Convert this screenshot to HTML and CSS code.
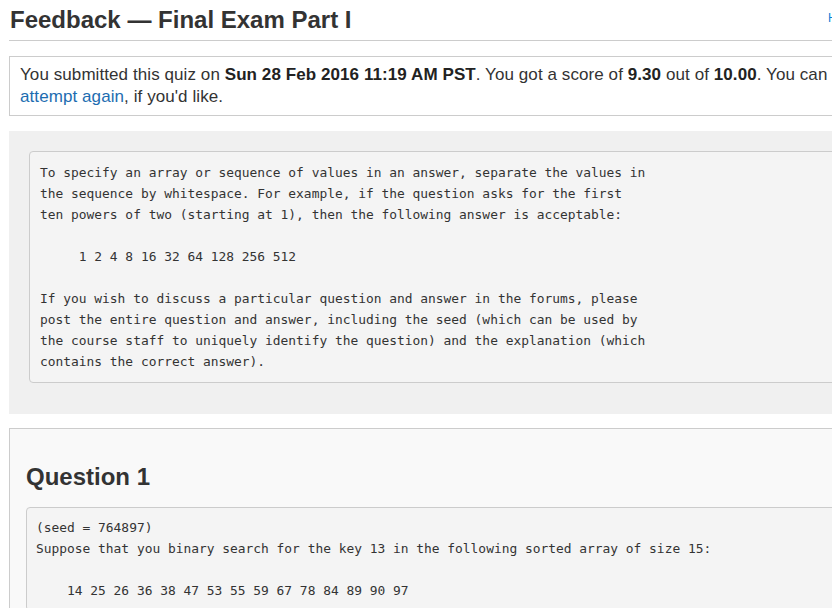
FILE: index.html
```html
<!DOCTYPE html>
<html>
<head>
<meta charset="utf-8">
<link rel="stylesheet" href="styles.css">
</head>
<body>
<div class="page">
  <header class="header">
    <h1 class="title">Feedback — Final Exam Part I</h1>
    <a class="help" href="#">Help Center</a>
  </header>
  <div class="submission">
    You submitted this quiz on <b>Sun 28 Feb 2016 11:19 AM PST</b>. You got a score of <b>9.30</b> out of <b>10.00</b>. You can <a href="#">attempt again</a>, if you'd like.
  </div>
  <section class="intro">
<pre class="code">To specify an array or sequence of values in an answer, separate the values in
the sequence by whitespace. For example, if the question asks for the first
ten powers of two (starting at 1), then the following answer is acceptable:

     1 2 4 8 16 32 64 128 256 512

If you wish to discuss a particular question and answer in the forums, please
post the entire question and answer, including the seed (which can be used by
the course staff to uniquely identify the question) and the explanation (which
contains the correct answer).</pre>
  </section>
  <section class="question">
    <h2 class="qtitle">Question 1</h2>
<pre class="code">(seed = 764897)
Suppose that you binary search for the key 13 in the following sorted array of size 15:

    14 25 26 36 38 47 53 55 59 67 78 84 89 90 97
</pre>
  </section>
</div>
</body>
</html>
```

FILE: styles.css
```css
html, body {
  margin: 0;
  padding: 0;
  background: #fff;
  overflow: hidden;
}
body {
  font-family: "Liberation Sans", Arial, sans-serif;
  color: #333;
  width: 832px;
  height: 608px;
}
.page {
  width: 860px;
  padding-left: 9px;
}
.header {
  display: flex;
  align-items: flex-start;
  border-bottom: 1px solid #ccc;
  height: 41px;
  box-sizing: border-box;
}
.title {
  margin: 0;
  padding: 5px 0 0 1px;
  font-size: 24px;
  line-height: 29px;
  font-weight: bold;
  color: #333;
}
.help {
  margin-left: auto;
  margin-right: -2px;
  width: 43px;
  overflow: hidden;
  margin-top: 10px;
  font-size: 12px;
  line-height: 16px;
  color: #0a7fd6;
  text-decoration: none;
  white-space: nowrap;
}
.submission {
  margin-top: 15px;
  border: 1px solid #ccc;
  padding: 7px 10px 7px 10px;
  font-size: 17px;
  line-height: 22px;
  letter-spacing: 0.08px;
  color: #333;
}
.submission b {
  color: #222;
}
.submission a {
  color: #1d6db1;
  text-decoration: none;
}
.intro {
  margin-top: 15px;
  background: #f0f0f0;
  padding: 20px 20px 31px 20px;
}
.code {
  margin: 0;
  background: #f4f4f4;
  border: 1px solid #ccc;
  border-radius: 4px;
  padding: 10px 10px;
  font-family: "DejaVu Sans Mono", "Liberation Mono", monospace;
  font-size: 12.9px;
  line-height: 21px;
  color: #333;
  white-space: pre;
}
.question {
  margin-top: 14px;
  border: 1px solid #ccc;
  background: #f9f9f9;
  padding: 33px 16px 16px 16px;
}
.qtitle {
  margin: 0 0 16px 0;
  font-size: 24px;
  line-height: 29px;
  font-weight: bold;
  color: #333;
}
.question .code {
  padding: 9px 9px;
}
```
